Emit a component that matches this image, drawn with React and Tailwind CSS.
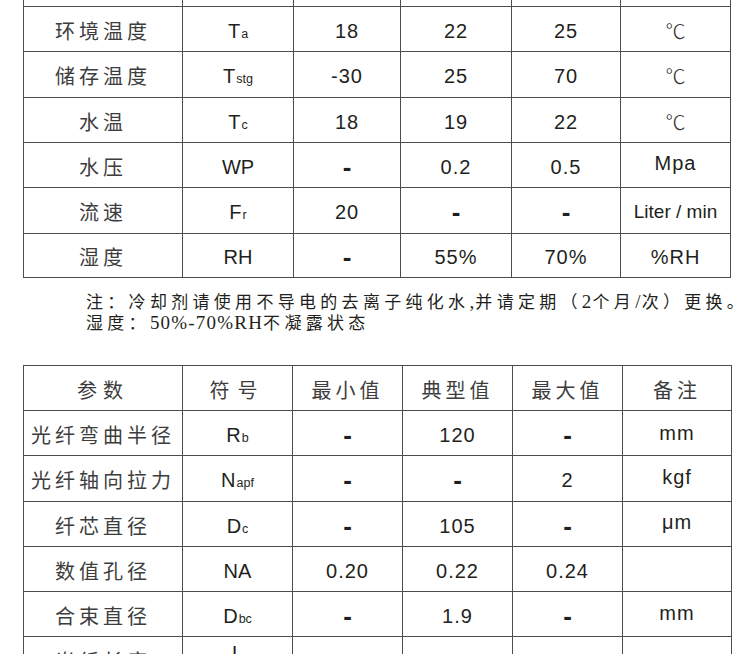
import React from "react";

const cjk = "font-['Noto_Sans_CJK_SC',sans-serif]";
const lat = "font-['Liberation_Sans','Noto_Sans_CJK_SC',sans-serif]";

function Sym({ main, sub }) {
  return (
    <span className={`${lat} text-[20px] text-[#231f20]`}>
      {main}
      {sub && <span className="text-[12.5px] ml-[1px]">{sub}</span>}
    </span>
  );
}

function Dash() {
  return <span className={`${lat} text-[26px] leading-none font-bold text-[#231f20]`}>-</span>;
}

function Num({ v, cls = "" }) {
  return <span className={`${lat} text-[20px] tracking-[1px] text-[#231f20] ${cls}`}>{v}</span>;
}

function Cn({ v, cls = "" }) {
  return (
    <span className={`${cjk} text-[20px] tracking-[4px] text-[#3d3d3d] whitespace-nowrap ${cls}`}>{v}</span>
  );
}

function Cell({ children, cls = "" }) {
  return (
    <div className={`border-r border-b border-[#4d4d4d] flex items-center justify-center pt-[3px] ${cls}`}>
      {children}
    </div>
  );
}

function L({ children }) {
  return <span className="text-[19px] leading-none tracking-[1.2px]">{children}</span>;
}

const C = <span className={`${cjk} text-[20px] font-light text-[#333]`}>℃</span>;

const top = [
  { h: "h-[45px]", c: [<Cn v="环境温度" />, <Sym main="T" sub="a" />, <Num v="18" />, <Num v="22" />, <Num v="25" />, C] },
  { h: "h-[46px]", c: [<Cn v="储存温度" />, <Sym main="T" sub="stg" />, <Num v="-30" />, <Num v="25" />, <Num v="70" />, C] },
  { h: "h-[45px]", c: [<Cn v="水温" />, <Sym main="T" sub="c" />, <Num v="18" />, <Num v="19" />, <Num v="22" />, C] },
  { h: "h-[45px]", c: [<Cn v="水压" />, <Sym main="WP" />, <Dash />, <Num v="0.2" />, <Num v="0.5" />, <Num v="Mpa" cls="-mt-[8px]" />] },
  { h: "h-[46px]", c: [<Cn v="流速" />, <Sym main="F" sub="r" />, <Num v="20" />, <Dash />, <Dash />, <span className={`${lat} text-[19px] text-[#231f20] whitespace-nowrap`}>Liter / min</span>] },
  { h: "h-[44px]", c: [<Cn v="湿度" />, <Sym main="RH" />, <Dash />, <Num v="55%" />, <Num v="70%" />, <Num v="%RH" />] },
];

const bottom = [
  { h: "h-[45px]", c: [<Cn v="参数" cls="tracking-[6px]" />, <Cn v="符号" cls="tracking-[8px]" />, <Cn v="最小值" />, <Cn v="典型值" />, <Cn v="最大值" />, <Cn v="备注" />] },
  { h: "h-[45px]", c: [<Cn v="光纤弯曲半径" />, <Sym main="R" sub="b" />, <Dash />, <Num v="120" />, <Dash />, <Num v="mm" cls="-mt-[4px]" />] },
  { h: "h-[46px]", c: [<Cn v="光纤轴向拉力" />, <Sym main="N" sub="apf" />, <Dash />, <Dash />, <Num v="2" />, <Num v="kgf" cls="-mt-[6px]" />] },
  { h: "h-[45px]", c: [<Cn v="纤芯直径" />, <Sym main="D" sub="c" />, <Dash />, <Num v="105" />, <Dash />, <Num v="μm" cls="-mt-[8px]" />] },
  { h: "h-[45px]", c: [<Cn v="数值孔径" />, <Sym main="NA" />, <Num v="0.20" />, <Num v="0.22" />, <Num v="0.24" />, <span />] },
  { h: "h-[45px]", c: [<Cn v="合束直径" />, <Sym main="D" sub="bc" />, <Dash />, <Num v="1.9" />, <Dash />, <Num v="mm" cls="-mt-[6px]" />] },
  { h: "h-[30px]", c: [<Cn v="光纤长度" cls="mt-[16px]" />, <Sym main="L" />, <span />, <Num v="3" cls="mt-[16px]" />, <span />, <span />] },
];

export default function App() {
  return (
    <div className="w-[756px] h-[654px] overflow-hidden bg-white pl-[23px]">
      {/* top table */}
      <div className="w-[708px] border-l border-[#4d4d4d] grid grid-cols-[159px_111px_107px_111px_109px_110px]">
        {[0, 1, 2, 3, 4, 5].map((i) => (
          <div key={"p" + i} className="h-[7px] border-r border-b border-[#4d4d4d]" />
        ))}
        {top.map((r, ri) =>
          r.c.map((c, ci) => (
            <Cell key={ri + "-" + ci} cls={r.h}>
              {c}
            </Cell>
          ))
        )}
      </div>

      {/* notes */}
      <div className="mt-[14px] pl-[63px] font-['Liberation_Serif','Noto_Sans_CJK_SC',serif] text-[17px] leading-[21px] tracking-[4.3px] text-[#231f20] whitespace-nowrap">
        <div className="h-[21px]">
          注：冷却剂请使用不导电的去离子纯化水<L>,</L>并请定期（<L>2</L>个月<L>/</L>次）更换。
        </div>
        <div className="h-[21px]">
          湿度：<L>50%-70%RH</L>不凝露状态
        </div>
      </div>

      {/* bottom table */}
      <div className="mt-[31px] w-[709px] border-l border-t border-[#4d4d4d] grid grid-cols-[159px_110px_110px_110px_110px_109px]">
        {bottom.map((r, ri) =>
          r.c.map((c, ci) => (
            <Cell key={"b" + ri + "-" + ci} cls={r.h + " overflow-hidden"}>
              {c}
            </Cell>
          ))
        )}
      </div>
    </div>
  );
}
